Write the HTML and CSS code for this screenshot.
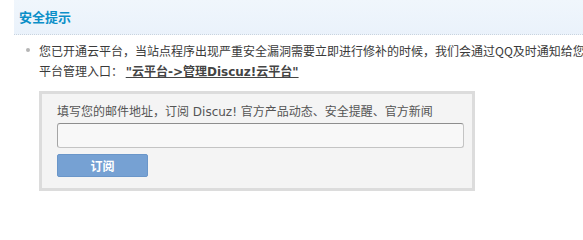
FILE: index.html
```html
<!DOCTYPE html>
<html lang="zh-CN">
<head>
<meta charset="utf-8">
<title>安全提示</title>
<link rel="stylesheet" href="styles.css">
</head>
<body>
<div class="page">
  <div class="head"><h3 class="title">安全提示</h3></div>
  <ul class="tips">
    <li class="tip">您已开通云平台，当站点程序出现严重安全漏洞需要立即进行修补的时候，我们会通过QQ及时通知给您<br>平台管理入口： <a class="link" href="#">"云平台-&gt;管理Discuz!云平台"</a></li>
  </ul>
  <form class="subscribe">
    <label class="label" for="email">填写您的邮件地址，订阅 Discuz! 官方产品动态、安全提醒、官方新闻</label>
    <input class="email" id="email" type="text">
    <button class="btn" type="button">订阅</button>
  </form>
</div>
</body>
</html>
```
FILE: styles.css
```css
html, body {
  margin: 0;
  padding: 0;
  background: #fff;
  overflow: hidden;
}
body {
  font: 12px/20px "Noto Sans CJK SC", "Liberation Sans", sans-serif;
  color: #333;
}
.page {
  padding-left: 14px;
}
.head {
  height: 34px;
  background: linear-gradient(#f0f6fc, #eaf2fb);
  border-bottom: 1px dotted #c8d3df;
  display: flex;
  align-items: center;
}
.title {
  margin: 0;
  padding: 0 0 0 5px;
  font-size: 13px;
  font-weight: bold;
  color: #0b8fc8;
  line-height: 18px;
}
.tips {
  list-style: none;
  margin: 0;
  padding: 6px 0 0 25px;
}
.tip {
  position: relative;
  white-space: nowrap;
  line-height: 19.5px;
  height: 39px;
  color: #3a3a3a;
}
.tip::before {
  content: "";
  position: absolute;
  left: -13px;
  top: 6.5px;
  width: 4px;
  height: 4px;
  border-radius: 50%;
  background: #b5b5b5;
}
.link {
  color: #444;
  font-weight: bold;
  font-family: "DejaVu Sans", "Noto Sans CJK SC", sans-serif;
  line-height: 1;
  text-decoration: underline;
}
.subscribe {
  margin: 11px 0 0 25px;
  width: 436px;
  border: 3px solid #dcdcdc;
  background: #f4f4f4;
  padding: 9px 0 11px 15px;
  display: flex;
  flex-direction: column;
  align-items: flex-start;
  box-sizing: border-box;
  height: 100px;
}
.label {
  display: block;
  height: 18px;
  line-height: 18px;
  color: #555;
  font-family: "DejaVu Sans", "Noto Sans CJK SC", sans-serif;
}
.email {
  margin: 2px 0 0;
  width: 407px;
  height: 25px;
  box-sizing: border-box;
  border: 1px solid #c4c4c4;
  border-top-color: #8e8e8e;
  border-left-color: #a5a5a5;
  border-radius: 3px;
  background: #f8f8f8;
  padding: 0 4px;
}
.btn {
  margin-top: 6px;
  width: 91px;
  height: 23px;
  box-sizing: border-box;
  border: 1px solid #6a96c9;
  border-radius: 2px;
  background: #76a1d3;
  color: #fff;
  font: bold 12px/20px "Noto Sans CJK SC", sans-serif;
  padding: 0;
}
```
